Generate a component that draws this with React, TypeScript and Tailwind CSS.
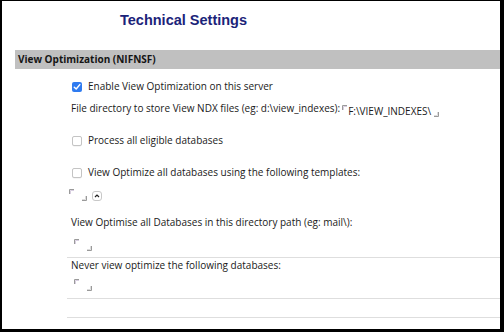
function TopMark() {
  return (
    <svg width="5" height="5" viewBox="0 0 5 5" className="block">
      <path d="M0.5 5 V0.5 H5" fill="none" stroke="#9a9a9a" strokeWidth="1" />
      <path d="M1.5 5 V1.5 H5" fill="none" stroke="#d8cfe0" strokeWidth="1" />
    </svg>
  );
}

function BottomMark() {
  return (
    <svg width="5" height="5" viewBox="0 0 5 5" className="block">
      <path d="M0 4.5 H4.5 V0" fill="none" stroke="#9a9a9a" strokeWidth="1" />
      <path d="M0 3.5 H3.5 V0" fill="none" stroke="#dcdcdc" strokeWidth="1" />
    </svg>
  );
}

function Field({ value }: { value?: string }) {
  return (
    <span className="inline-flex items-start">
      <span className="mt-[1px]">
        <TopMark />
      </span>
      {value ? <span className="ml-[1px] leading-[14px]">{value}</span> : <span className="w-[5px]" />}
      <span className="mt-[8px] ml-[3px]">
        <BottomMark />
      </span>
    </span>
  );
}

function Check({ checked }: { checked?: boolean }) {
  if (checked) {
    return (
      <span className="w-[10px] h-[10px] rounded-[2px] bg-[#2f7bf0] flex items-center justify-center">
        <svg width="8" height="8" viewBox="0 0 8 8">
          <path d="M1.3 4.2 L3.2 6 L6.8 1.6" fill="none" stroke="white" strokeWidth="1.5" strokeLinecap="round" strokeLinejoin="round" />
        </svg>
      </span>
    );
  }
  return <span className="w-[10px] h-[10px] rounded-[2px] border border-[#c4c4c4] bg-white shadow-[0_0.5px_0.5px_rgba(0,0,0,0.08)]" />;
}

export default function App() {
  return (
    <div className="w-[504px] h-[332px] bg-black pt-[1px] pl-[2px] pr-[4px] pb-[3px]">
      <div className="bg-white h-full overflow-hidden text-[10px] text-[#1a1a1a] font-['Open_Sans',sans-serif]">
        <div className="h-[49px] pl-[118px] pt-[10px]">
          <h1 className="font-['Liberation_Sans',Arial,sans-serif] font-bold text-[14.5px] text-[#1b2379] leading-[18px]">
            Technical Settings
          </h1>
        </div>
        <div className="ml-[13px] h-[19px] bg-[#c0c0c0] flex items-center pl-[3px] font-bold text-[#151515]">
          View Optimization (NIFNSF)
        </div>
        <div className="pl-[65px]">
          <div className="mt-[8px] h-[19px] flex items-center pl-[5px] gap-[6px]">
            <Check checked />
            <span>Enable View Optimization on this server</span>
          </div>
          <div className="h-[24px] flex items-center pl-[4px]">
            <span>File directory to store View NDX files (eg: d:\view_indexes):</span>
            <span className="ml-[2px] mt-[1px]">
              <Field value="F:\VIEW_INDEXES\" />
            </span>
          </div>
          <div className="h-[41px] flex items-center pl-[5px] gap-[6px]">
            <Check />
            <span>Process all eligible databases</span>
          </div>
          <div className="h-[23px] flex items-center pl-[5px] gap-[6px]">
            <Check />
            <span>View Optimize all databases using the following templates:</span>
          </div>
          <div className="h-[20px] flex items-start pl-[2px] pt-[4px]">
            <Field />
            <span className="ml-[5px] mt-[3px] w-[10px] h-[10px] rounded-[3px] border border-[#c8c8c8] bg-white flex items-center justify-center">
              <svg width="6" height="4" viewBox="0 0 6 4">
                <path d="M1 3 L3 1 L5 3" fill="none" stroke="#222" strokeWidth="1.2" />
              </svg>
            </span>
          </div>
          <div className="mt-[10px] h-[16px] flex items-center pl-[4px]">
            View Optimise all Databases in this directory path (eg: mail\):
          </div>
          <div className="h-[20px] pl-[7px] pt-[3px]">
            <Field />
          </div>
          <div className="mt-[7px] border-t border-[#dedede] h-[15px] flex items-center pl-[4px]">
            Never view optimize the following databases:
          </div>
          <div className="h-[26px] pl-[7px] pt-[1px]">
            <Field />
          </div>
          <div className="border-t border-[#dedede] h-[19px]" />
          <div className="border-t border-[#dedede]" />
        </div>
      </div>
    </div>
  );
}
